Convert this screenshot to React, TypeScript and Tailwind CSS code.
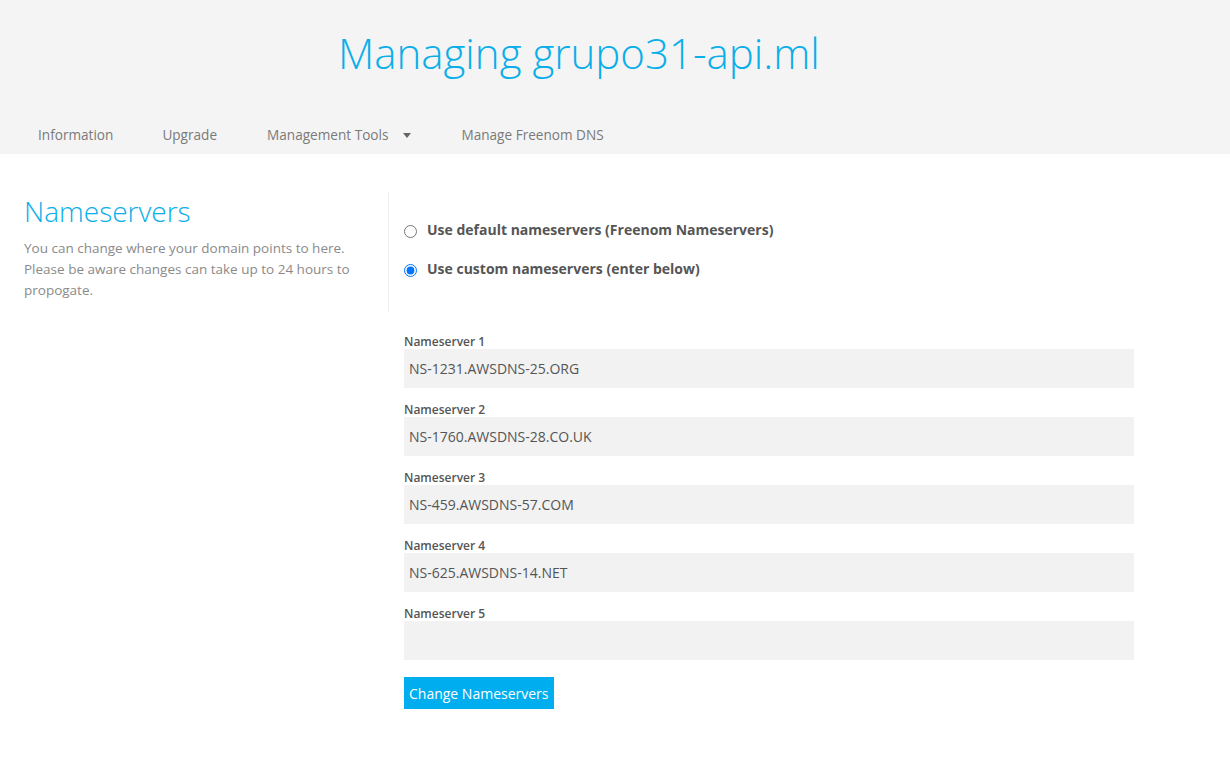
const servers = [
  "NS-1231.AWSDNS-25.ORG",
  "NS-1760.AWSDNS-28.CO.UK",
  "NS-459.AWSDNS-57.COM",
  "NS-625.AWSDNS-14.NET",
  "",
];

function App() {
  return (
    <div className="min-h-screen bg-white font-['Open_Sans',sans-serif]">
      {/* cabeçalho */}
      <div className="bg-[#f4f4f4]">
        <div className="h-[115px] pl-[338px] pt-[25px]">
          <h1 className="text-[42px] leading-[56px] font-light text-[#0aaee9]">
            Managing grupo31-api.ml
          </h1>
        </div>
        <nav className="flex h-[39px] items-center pl-[38px] pt-[2px] text-[13.6px] text-[#7a7a7a]">
          <span>Information</span>
          <span className="ml-[49px]">Upgrade</span>
          <span className="ml-[50px] flex items-center">
            Management Tools
            <span className="ml-[15px] inline-block border-x-[4px] border-t-[5px] border-x-transparent border-t-[#666]" />
          </span>
          <span className="ml-[50px]">Manage Freenom DNS</span>
        </nav>
      </div>

      {/* conteúdo */}
      <div className="flex pt-[38px]">
        <div className="w-[388px] shrink-0 pl-[24px] pr-[20px]">
          <h2 className="text-[28px] leading-[38px] font-light text-[#0aaee9]">
            Nameservers
          </h2>
          <p className="mt-[8px] text-[13.5px] leading-[21px] text-[#8a8a8a]">
            You can change where your domain points to here. Please be aware
            changes can take up to 24 hours to propogate.
          </p>
        </div>

        <div className="w-[746px]">
          <div className="h-[120px] border-l border-[#eee] pl-[15px] pt-[27px]">
            <label className="flex items-center gap-[10px] text-[14px] font-bold text-[#555]">
              <input type="radio" name="ns" className="mt-[4px] h-[13px] w-[13px]" />
              Use default nameservers (Freenom Nameservers)
            </label>
            <label className="mt-[18px] flex items-center gap-[10px] text-[14px] font-bold text-[#555]">
              <input type="radio" name="ns" defaultChecked className="mt-[4px] h-[13px] w-[13px]" />
              Use custom nameservers (enter below)
            </label>
          </div>

          <div className="ml-[16px] mt-[23px] flex flex-col gap-[15px]">
            {servers.map((s, i) => (
              <div key={i}>
                <div className="text-[12px] leading-[14px] font-semibold text-[#555]">
                  Nameserver {i + 1}
                </div>
                <div className="h-[39px] bg-[#f2f2f2] px-[5px] text-[14px] leading-[39px] text-[#555]">
                  {s}
                </div>
              </div>
            ))}
          </div>

          <button className="ml-[16px] mt-[17px] h-[32px] bg-[#00aeef] px-[5px] text-[14px] text-white">
            Change Nameservers
          </button>
        </div>
      </div>
    </div>
  );
}

export default App;
